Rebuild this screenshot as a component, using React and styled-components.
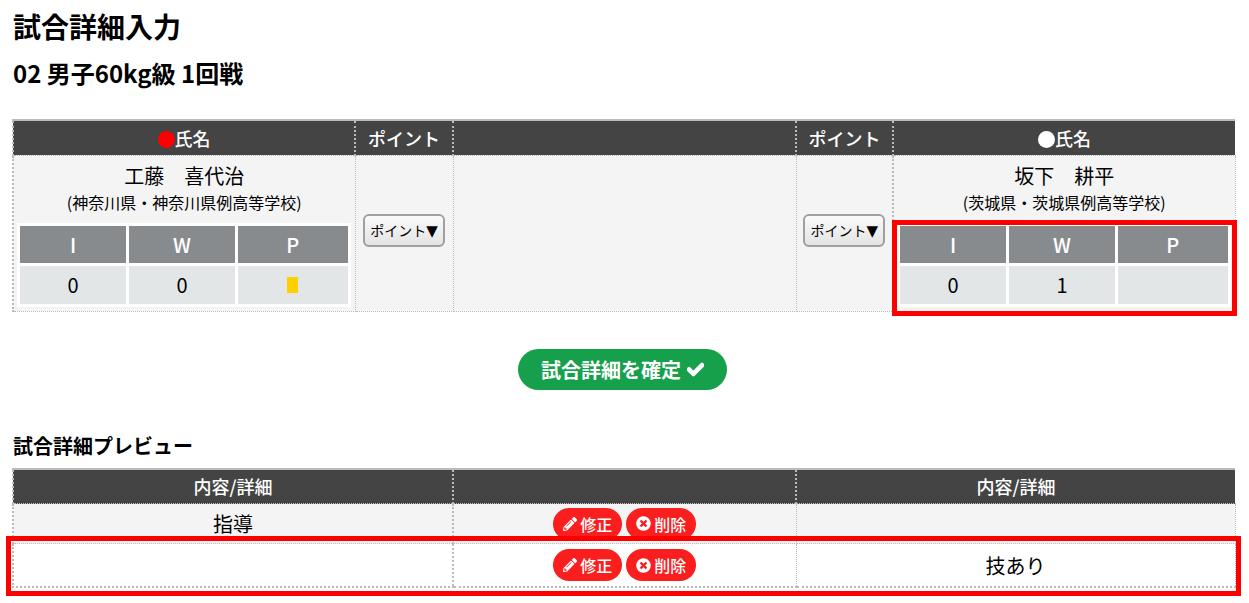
import styled, { createGlobalStyle } from "styled-components";
import { FaCheck, FaPencilAlt, FaTimesCircle } from "react-icons/fa";

const GlobalStyle = createGlobalStyle`
  html, body {
    margin: 0;
    padding: 0;
    background: #fff;
    color: #000;
    font-family: "Noto Sans CJK JP", "Noto Sans", sans-serif;
    overflow: hidden;
  }
`;

const Page = styled.div`
  width: 1249px;
  height: 603px;
  box-sizing: border-box;
  padding: 7px 13px 0 13px;
  overflow: hidden;
`;

const Title = styled.h1`
  margin: 0;
  font-size: 28px;
  line-height: 38px;
  font-weight: 700;
`;

const SubTitle = styled.h2`
  margin: 12px 0 0;
  font-size: 24px;
  line-height: 32px;
  font-weight: 700;
`;

const SectionTitle = styled.h3`
  margin: 0;
  font-size: 20px;
  line-height: 26px;
  font-weight: 700;
`;

const Table = styled.table`
  width: 1222px;
  table-layout: fixed;
  border-collapse: collapse;
  border-top: 2px solid #bbb;
  margin: ${(p) => p.$top}px 0 0 -1px;
`;

const Head = styled.th`
  box-sizing: border-box;
  width: ${(p) => p.$width}px;
  height: 35px;
  padding: 0;
  background: #444;
  color: #fff;
  font-size: 18px;
  font-weight: 500;
  text-align: center;
  border-left: 2px dotted #bbb;
  border-bottom: 1px dotted #bbb;
`;

const Cell = styled.td`
  padding: ${(p) => p.$pad || "0"};
  background: ${(p) => (p.$plain ? "#fff" : "#f4f4f4")};
  text-align: center;
  vertical-align: ${(p) => p.$align || "middle"};
  font-size: 20px;
  border: 1px dotted #bbb;
  border-left-width: ${(p) => (p.$thick ? 2 : 1)}px;
  border-bottom-width: ${(p) => (p.$thickBottom ? 2 : 1)}px;
`;

const PlayerName = styled.div`
  font-size: 20px;
  line-height: 28px;
  margin-top: 6px;
`;

const School = styled.div`
  font-size: 16px;
  line-height: 24px;
`;

const ScoreWrap = styled.div`
  position: relative;
  margin: 9px 4px 4px 3px;
`;

const Highlight = styled.div`
  position: absolute;
  border: 5px solid #f00;
  pointer-events: none;
  left: ${(p) => p.$left}px;
  top: ${(p) => p.$top}px;
  right: ${(p) => p.$right}px;
  bottom: ${(p) => p.$bottom}px;
`;

const ScoreTable = styled.table`
  width: 100%;
  table-layout: fixed;
  border-collapse: separate;
  border-spacing: 3px;
  background: #fff;
`;

const ScoreHead = styled.th`
  width: ${(p) => (p.$wide ? "auto" : "106px")};
  height: 37px;
  padding: 0;
  background: #888b8e;
  color: #fff;
  font-size: 20px;
  font-weight: 500;
`;

const ScoreCell = styled.td`
  height: 38px;
  padding: 0;
  background: #e3e6e7;
  font-size: 20px;
`;

const Penalty = styled.span`
  display: block;
  width: 11px;
  height: 16px;
  margin: 0 auto;
  background: #ffd000;
`;

const PointButton = styled.button`
  width: 82px;
  height: 33px;
  padding: 0;
  border: 2px solid #a0a0a0;
  border-radius: 6px;
  background: linear-gradient(#fafafa, #e4e4e4);
  color: #000;
  font-family: inherit;
  font-size: 14px;
  white-space: nowrap;
`;

const Arrow = styled.span`
  font-size: 15px;
  font-family: "DejaVu Sans", sans-serif;
`;

const Dot = styled.span`
  display: inline-block;
  width: 17px;
  height: 17px;
  border-radius: 50%;
  background: ${(p) => p.$color};
  vertical-align: -2px;
`;

const ConfirmRow = styled.div`
  display: flex;
  justify-content: center;
  margin: 37px 0 43px;
  padding-right: 4px;
`;

const ConfirmButton = styled.button`
  display: flex;
  align-items: center;
  justify-content: center;
  gap: 6px;
  width: 209px;
  height: 41px;
  padding: 0;
  border: none;
  border-radius: 21px;
  background: #16a04c;
  color: #fff;
  font-family: inherit;
  font-size: 20px;
  font-weight: 700;
  svg {
    stroke: currentColor;
    stroke-width: 40px;
  }
`;

const ActionRow = styled.div`
  display: flex;
  justify-content: center;
  gap: 4px;
  height: ${(p) => p.$height}px;
  align-items: center;
`;

const ActionButton = styled.button`
  display: flex;
  align-items: center;
  justify-content: center;
  gap: 3px;
  width: ${(p) => p.$width}px;
  height: 32px;
  padding: 0;
  border: none;
  border-radius: 16px;
  background: #fa1e1e;
  color: #fff;
  font-family: inherit;
  font-size: 16px;
  font-weight: 500;
`;

const PreviewWrap = styled.div`
  position: relative;
`;

const players = {
  red: {
    name: "工藤　喜代治",
    school: "(神奈川県・神奈川県例高等学校)",
    scores: ["0", "0", <Penalty key="p" />],
  },
  white: {
    name: "坂下　耕平",
    school: "(茨城県・茨城県例高等学校)",
    scores: ["0", "1", ""],
  },
};

function Player({ player, marked }) {
  return (
    <Cell $align="top" $thick>
      <PlayerName>{player.name}</PlayerName>
      <School>{player.school}</School>
      <ScoreWrap>
        <ScoreTable>
          <thead>
            <tr>
              <ScoreHead>I</ScoreHead>
              <ScoreHead>W</ScoreHead>
              <ScoreHead $wide>P</ScoreHead>
            </tr>
          </thead>
          <tbody>
            <tr>
              {player.scores.map((s, i) => (
                <ScoreCell key={i}>{s}</ScoreCell>
              ))}
            </tr>
          </tbody>
        </ScoreTable>
        {marked && <Highlight $left={-5} $top={-3} $right={-6} $bottom={-9} />}
      </ScoreWrap>
    </Cell>
  );
}

function Actions({ height }) {
  return (
    <ActionRow $height={height}>
      <ActionButton $width={69}>
        <FaPencilAlt size={14} />
        修正
      </ActionButton>
      <ActionButton $width={70}>
        <FaTimesCircle size={15} />
        削除
      </ActionButton>
    </ActionRow>
  );
}

export default function App() {
  return (
    <Page>
      <GlobalStyle />
      <Title>試合詳細入力</Title>
      <SubTitle>02 男子60kg級 1回戦</SubTitle>

      <Table $top={30}>
        <thead>
          <tr>
            <Head $width={342}>
              <Dot $color="#f00" />
              氏名
            </Head>
            <Head $width={98}>ポイント</Head>
            <Head $width={343}></Head>
            <Head $width={97}>ポイント</Head>
            <Head $width={342}>
              <Dot $color="#fff" />
              氏名
            </Head>
          </tr>
        </thead>
        <tbody>
          <tr>
            <Player player={players.red} />
            <Cell $pad="0 0 6px">
              <PointButton>
                ポイント<Arrow>▼</Arrow>
              </PointButton>
            </Cell>
            <Cell />
            <Cell $pad="0 0 6px">
              <PointButton>
                ポイント<Arrow>▼</Arrow>
              </PointButton>
            </Cell>
            <Player player={players.white} marked />
          </tr>
        </tbody>
      </Table>

      <ConfirmRow>
        <ConfirmButton>
          試合詳細を確定
          <FaCheck size={17} />
        </ConfirmButton>
      </ConfirmRow>

      <SectionTitle>試合詳細プレビュー</SectionTitle>

      <PreviewWrap>
        <Table $top={9}>
          <thead>
            <tr>
              <Head $width={440}>内容/詳細</Head>
              <Head $width={343}></Head>
              <Head $width={439}>内容/詳細</Head>
            </tr>
          </thead>
          <tbody>
            <tr>
              <Cell $thick>指導</Cell>
              <Cell $thick>
                <Actions height={39} />
              </Cell>
              <Cell />
            </tr>
            <tr>
              <Cell $plain $thick $thickBottom></Cell>
              <Cell $plain $thick $thickBottom>
                <Actions height={42} />
              </Cell>
              <Cell $plain $thickBottom>技あり</Cell>
            </tr>
          </tbody>
        </Table>
        <Highlight $left={-7} $top={68} $right={-5} $bottom={-8} />
      </PreviewWrap>
    </Page>
  );
}
